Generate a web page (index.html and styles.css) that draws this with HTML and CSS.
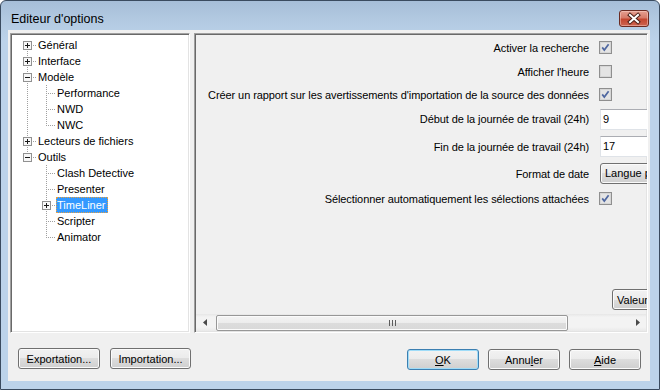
FILE: index.html
```html
<!DOCTYPE html>
<html lang="fr">
<head>
<meta charset="utf-8">
<title>Editeur d'options</title>
<link rel="stylesheet" href="styles.css">
</head>
<body>
<div class="window">
  <div class="titlebar">
    <span class="title">Editeur d'options</span>
    <span class="close">
      <svg width="28" height="15" viewBox="0 0 28 15">
        <path d="M10 4 L18 11 M18 4 L10 11" stroke="#4a2018" stroke-width="4" stroke-linecap="square"/>
        <path d="M10 4 L18 11 M18 4 L10 11" stroke="#ffffff" stroke-width="2" stroke-linecap="square"/>
      </svg>
    </span>
  </div>
  <div class="client">
    <div class="main">
      <div class="tree">
        <div class="row"><span class="c first"><i class="box plus"></i></span><span class="lbl">Général</span></div>
        <div class="row"><span class="c mid"><i class="box plus"></i></span><span class="lbl">Interface</span></div>
        <div class="row"><span class="c mid"><i class="box minus"></i></span><span class="lbl">Modèle</span></div>
        <div class="row"><span class="c v"></span><span class="c t"></span><span class="lbl">Performance</span></div>
        <div class="row"><span class="c v"></span><span class="c t"></span><span class="lbl">NWD</span></div>
        <div class="row"><span class="c v"></span><span class="c l"></span><span class="lbl">NWC</span></div>
        <div class="row"><span class="c mid"><i class="box plus"></i></span><span class="lbl">Lecteurs de fichiers</span></div>
        <div class="row"><span class="c last"><i class="box minus"></i></span><span class="lbl">Outils</span></div>
        <div class="row"><span class="c"></span><span class="c t"></span><span class="lbl">Clash Detective</span></div>
        <div class="row"><span class="c"></span><span class="c t"></span><span class="lbl">Presenter</span></div>
        <div class="row"><span class="c"></span><span class="c t"><i class="box plus"></i></span><span class="lbl sel">TimeLiner</span></div>
        <div class="row"><span class="c"></span><span class="c t"></span><span class="lbl">Scripter</span></div>
        <div class="row"><span class="c"></span><span class="c l"></span><span class="lbl">Animator</span></div>
      </div>
      <div class="panel">
        <div class="form">
          <span class="label">Activer la recherche</span>
          <span class="ctl"><svg class="cb" width="13" height="13" viewBox="0 0 13 13"><rect x="0.5" y="0.5" width="12" height="12" fill="#f3f3f3" stroke="#8f8f8f"/><rect x="1.5" y="1.5" width="10" height="10" fill="#e4e4e4" stroke="#d6d6d6"/><path d="M3.2 6.4 L5.3 9 L9.6 3.2" fill="none" stroke="#4f67a0" stroke-width="1.7"/></svg></span>
          <span class="label">Afficher l'heure</span>
          <span class="ctl"><svg class="cb" width="13" height="13" viewBox="0 0 13 13"><rect x="0.5" y="0.5" width="12" height="12" fill="#f3f3f3" stroke="#8f8f8f"/><rect x="1.5" y="1.5" width="10" height="10" fill="#e4e4e4" stroke="#d6d6d6"/></svg></span>
          <span class="label">Créer un rapport sur les avertissements d'importation de la source des données</span>
          <span class="ctl"><svg class="cb" width="13" height="13" viewBox="0 0 13 13"><rect x="0.5" y="0.5" width="12" height="12" fill="#f3f3f3" stroke="#8f8f8f"/><rect x="1.5" y="1.5" width="10" height="10" fill="#e4e4e4" stroke="#d6d6d6"/><path d="M3.2 6.4 L5.3 9 L9.6 3.2" fill="none" stroke="#4f67a0" stroke-width="1.7"/></svg></span>
          <span class="label">Début de la journée de travail (24h)</span>
          <span class="ctl"><span class="inp">9</span></span>
          <span class="label">Fin de la journée de travail (24h)</span>
          <span class="ctl"><span class="inp">17</span></span>
          <span class="label">Format de date</span>
          <span class="ctl"><span class="combo">Langue par défaut</span></span>
          <span class="label">Sélectionner automatiquement les sélections attachées</span>
          <span class="ctl"><svg class="cb" width="13" height="13" viewBox="0 0 13 13"><rect x="0.5" y="0.5" width="12" height="12" fill="#f3f3f3" stroke="#8f8f8f"/><rect x="1.5" y="1.5" width="10" height="10" fill="#e4e4e4" stroke="#d6d6d6"/><path d="M3.2 6.4 L5.3 9 L9.6 3.2" fill="none" stroke="#4f67a0" stroke-width="1.7"/></svg></span>
        </div>
        <div class="valrow"><span class="btn val">Valeur par défaut</span></div>
        <div class="hscroll">
          <span class="sbtn"><svg width="4" height="7" viewBox="0 0 4 7"><path d="M4 0 L0 3.5 L4 7 Z" fill="#4a4a4a"/></svg></span>
          <span class="thumb"><svg width="7" height="6" viewBox="0 0 7 6"><path d="M0.5 0 V6 M3.5 0 V6 M6.5 0 V6" stroke="#5c5c5c" stroke-width="1"/></svg></span>
          <span class="track"></span>
          <span class="sbtn"><svg width="4" height="7" viewBox="0 0 4 7"><path d="M0 0 L4 3.5 L0 7 Z" fill="#4a4a4a"/></svg></span>
        </div>
      </div>
    </div>
    <div class="actions">
      <div class="group">
        <span class="btn exp">Exportation...</span>
        <span class="btn imp">Importation...</span>
      </div>
      <div class="group dlg">
        <span class="btn std def"><u>O</u>K</span>
        <span class="btn std">Annu<u>l</u>er</span>
        <span class="btn std"><u>A</u>ide</span>
      </div>
    </div>
  </div>
</div>
</body>
</html>
```

FILE: styles.css
```css
html, body {
  margin: 0;
  padding: 0;
}
body {
  width: 660px;
  height: 390px;
  overflow: hidden;
  background: #ffffff;
  font-family: "Liberation Sans", Arial, sans-serif;
  font-size: 11px;
  color: #000;
}
.window {
  box-sizing: border-box;
  width: 660px;
  height: 390px;
  border: 1px solid #3a4b5f;
  border-radius: 6px 6px 0 0;
  background: linear-gradient(#a6bed8 0, #b3cae2 20px, #bcd3ea 40px, #bcd3ea 100%);
  padding: 0 9px 8px 7px;
  display: flex;
  flex-direction: column;
}
.titlebar {
  height: 29px;
  display: flex;
  align-items: flex-start;
  justify-content: space-between;
}
.title {
  font-size: 12.5px;
  margin: 11px 0 0 3px;
  color: #000;
}
.close {
  box-sizing: border-box;
  width: 30px;
  height: 17px;
  margin: 9px 1px 0 0;
  border: 1px solid #6b2b22;
  border-radius: 3px;
  background: linear-gradient(#e5a091 0, #d77b69 45%, #c3462f 55%, #cc6450 100%);
  box-shadow: inset 0 0 0 1px rgba(255, 220, 210, 0.45);
  display: flex;
  align-items: center;
  justify-content: center;
}
.client {
  flex: 1;
  background: #f0f0f0;
  display: flex;
  flex-direction: column;
  overflow: hidden;
  border: 0;
}
.main {
  display: flex;
  gap: 4px;
  padding: 3px 0 0 2px;
  height: 300px;
}
.tree, .panel {
  box-sizing: border-box;
  height: 300px;
  border: 1px solid;
  border-color: #a0a0a0 #ffffff #ffffff #a0a0a0;
  box-shadow: inset 1px 1px 0 #696969, inset -1px -1px 0 #e3e3e3;
}
.tree {
  width: 180px;
  background: #fff;
  padding: 3px 0 0 7px;
}
.row {
  display: flex;
  height: 16px;
}
.c {
  width: 19px;
  height: 16px;
  flex: none;
  display: flex;
  justify-content: center;
  align-items: flex-start;
  background-repeat: no-repeat;
}
.v, .t, .l, .first, .mid, .last {
  --dv: repeating-linear-gradient(to bottom, #a0a0a0 0 1px, transparent 1px 2px);
  --dh: repeating-linear-gradient(to right, #a0a0a0 0 1px, transparent 1px 2px);
}
.v {
  background-image: var(--dv);
  background-size: 1px 16px;
  background-position: 9px 0;
}
.t, .mid {
  background-image: var(--dv), var(--dh);
  background-size: 1px 16px, 10px 1px;
  background-position: 9px 0, 9px 8px;
}
.l, .last {
  background-image: var(--dv), var(--dh);
  background-size: 1px 9px, 10px 1px;
  background-position: 9px 0, 9px 8px;
}
.first {
  background-image: var(--dv), var(--dh);
  background-size: 1px 8px, 10px 1px;
  background-position: 9px 8px, 9px 8px;
}
.box {
  box-sizing: border-box;
  width: 9px;
  height: 9px;
  margin-top: 4px;
  border: 1px solid #919191;
  background-color: #f7f7f7;
  background-repeat: no-repeat;
}
.plus {
  background-image: linear-gradient(#1a1a1a, #1a1a1a), linear-gradient(#1a1a1a, #1a1a1a);
  background-size: 5px 1px, 1px 5px;
  background-position: 1px 3px, 3px 1px;
}
.minus {
  background-image: linear-gradient(#1a1a1a, #1a1a1a);
  background-size: 5px 1px;
  background-position: 1px 3px;
}
.lbl {
  line-height: 16px;
  padding: 0 2px 0 1px;
  white-space: nowrap;
}
.lbl.sel {
  box-sizing: border-box;
  background: #3399ff;
  color: #fff;
  outline: 1px dotted #e8a040;
  outline-offset: -1px;
}
.panel {
  width: 454px;
  flex: none;
  background: #f0f0f0;
  display: flex;
  flex-direction: column;
  overflow: hidden;
  padding: 1px;
}
.form {
  display: grid;
  grid-template-columns: 393px 90px;
  column-gap: 10px;
  grid-template-rows: 25px 23px 23px 26px 29px 25px 25px;
  align-items: center;
}
.label {
  text-align: right;
  white-space: nowrap;
  letter-spacing: -0.09px;
}
.ctl {
  display: flex;
  align-items: center;
}
.cb {
  display: block;
}
.inp {
  box-sizing: border-box;
  margin-left: 1px;
  width: 80px;
  height: 21px;
  background: #fff;
  border: 1px solid #dfe3e8;
  border-top-color: #abadb3;
  padding: 2px 0 0 2px;
  line-height: 14px;
}
.combo {
  box-sizing: border-box;
  margin-left: 1px;
  width: 110px;
  height: 21px;
  border: 1px solid #707070;
  border-radius: 3px;
  background: linear-gradient(#f2f2f2 0%, #ebebeb 50%, #dddddd 50%, #cfcfcf 100%);
  box-shadow: inset 0 0 0 1px #fafafa;
  padding-left: 4px;
  line-height: 19px;
  white-space: nowrap;
}
.valrow {
  margin-top: auto;
  padding-left: 416px;
  margin-bottom: 4px;
}
.btn {
  box-sizing: border-box;
  height: 21px;
  border: 1px solid #707070;
  border-radius: 3px;
  background: linear-gradient(#f2f2f2 0%, #ebebeb 50%, #dddddd 50%, #cfcfcf 100%);
  box-shadow: inset 0 0 0 1px #fbfbfb;
  display: flex;
  align-items: center;
  justify-content: center;
  white-space: nowrap;
}
.val {
  width: 110px;
  justify-content: flex-start;
  padding-left: 4px;
}
.hscroll {
  height: 17px;
  width: 450px;
  display: flex;
  align-items: center;
  background: linear-gradient(#e6e6e6 0, #f3f3f3 3px, #f3f3f3 13px, #e9e9e9 17px);
}
.sbtn {
  width: 17px;
  height: 17px;
  flex: none;
  display: flex;
  align-items: center;
  justify-content: center;
}
.thumb {
  box-sizing: border-box;
  margin-left: 3px;
  width: 352px;
  height: 16px;
  border: 1px solid #979797;
  border-radius: 2px;
  background: linear-gradient(#f4f4f4 0%, #ececec 50%, #dcdcdc 51%, #d9d9d9 100%);
  box-shadow: inset 0 0 0 1px #fbfbfb;
  display: flex;
  align-items: center;
  justify-content: center;
}
.track {
  flex: 1;
}
.actions {
  display: flex;
  justify-content: space-between;
  align-items: flex-start;
  padding: 15px 9px 0 10px;
}
.group {
  display: flex;
  gap: 10px;
}
.group.dlg {
  gap: 9px;
  margin-top: 1px;
}
.exp { width: 82px; }
.imp { width: 81px; }
.std { width: 72px; }
.def {
  border-color: #3c7fb1;
  box-shadow: inset 0 0 0 1px #9fdcf8;
}
u {
  text-decoration: underline;
  text-underline-offset: 1px;
}
```
